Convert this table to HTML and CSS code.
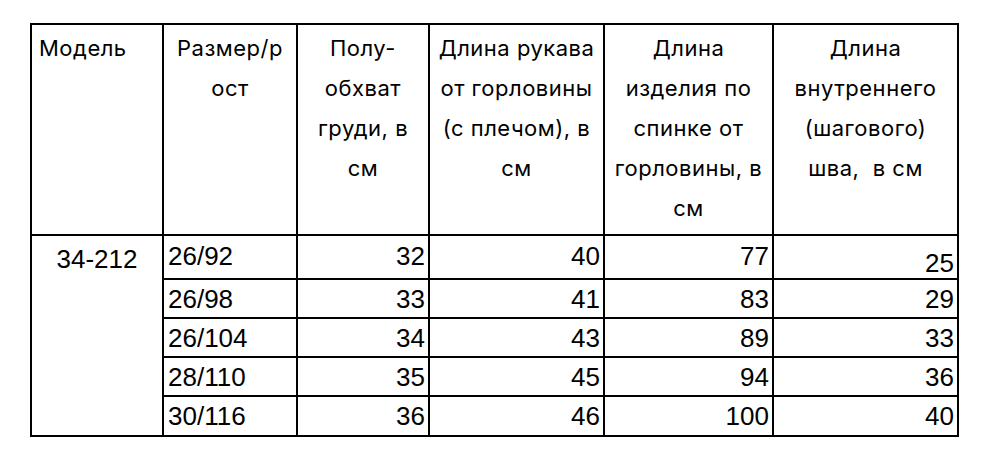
FILE: index.html
```html
<!DOCTYPE html>
<html lang="ru">
<head>
<meta charset="utf-8">
<link rel="stylesheet" href="styles.css">
</head>
<body>
<table class="sizes">
  <colgroup>
    <col class="c1"><col class="c2"><col class="c3"><col class="c4"><col class="c5"><col class="c6">
  </colgroup>
  <thead>
    <tr class="head">
      <th class="left">Модель</th>
      <th>Размер/р<br>ост</th>
      <th>Полу-<br>обхват<br>груди, в<br>см</th>
      <th>Длина рукава<br>от горловины<br>(с плечом), в<br>см</th>
      <th>Длина<br>изделия по<br>спинке от<br>горловины, в<br>см</th>
      <th>Длина<br>внутреннего<br>(шагового)<br>шва,&nbsp; в см</th>
    </tr>
  </thead>
  <tbody>
    <tr class="first">
      <td class="model" rowspan="5">34-212</td>
      <td class="size">26/92</td><td class="num">32</td><td class="num">40</td><td class="num">77</td><td class="num low">25</td>
    </tr>
    <tr class="row"><td class="size">26/98</td><td class="num">33</td><td class="num">41</td><td class="num">83</td><td class="num">29</td></tr>
    <tr class="row"><td class="size">26/104</td><td class="num">34</td><td class="num">43</td><td class="num">89</td><td class="num">33</td></tr>
    <tr class="row"><td class="size">28/110</td><td class="num">35</td><td class="num">45</td><td class="num">94</td><td class="num">36</td></tr>
    <tr class="last"><td class="size">30/116</td><td class="num">36</td><td class="num">46</td><td class="num">100</td><td class="num">40</td></tr>
  </tbody>
</table>
</body>
</html>
```
FILE: styles.css
```css
html, body {
  margin: 0;
  padding: 0;
  background: #ffffff;
}
body {
  padding: 23px 0 0 30px;
}
.sizes {
  border-collapse: collapse;
  table-layout: fixed;
  width: 927px;
  color: #000;
}
.c1 { width: 132px; }
.c2 { width: 134px; }
.c3 { width: 132px; }
.c4 { width: 175px; }
.c5 { width: 169px; }
.c6 { width: 185px; }
.sizes th, .sizes td {
  border: 2px solid #000;
  padding: 0;
}
.head {
  height: 211px;
}
.head th {
  font-family: Inter, "Noto Sans", sans-serif;
  font-weight: 400;
  font-size: 22px;
  letter-spacing: 0.5px;
  line-height: 40px;
  text-align: center;
  vertical-align: top;
  padding-top: 3px;
  white-space: nowrap;
}
.head th.left {
  text-align: left;
  padding-left: 7px;
}
.sizes td {
  font-family: "Liberation Sans", Arial, sans-serif;
  font-size: 26px;
  line-height: 26px;
  vertical-align: middle;
}
.first { height: 44px; }
.row { height: 39px; }
.last { height: 40px; }
.sizes td.model {
  text-align: center;
  vertical-align: top;
  padding-top: 10px;
}
.sizes td.size {
  text-align: left;
  padding-left: 4px;
}
.sizes td.num {
  text-align: right;
  padding-right: 3px;
}
.first .size, .first .num {
  padding-bottom: 2px;
}
.sizes .first td.low {
  padding-top: 12px;
  padding-bottom: 0;
}
```
